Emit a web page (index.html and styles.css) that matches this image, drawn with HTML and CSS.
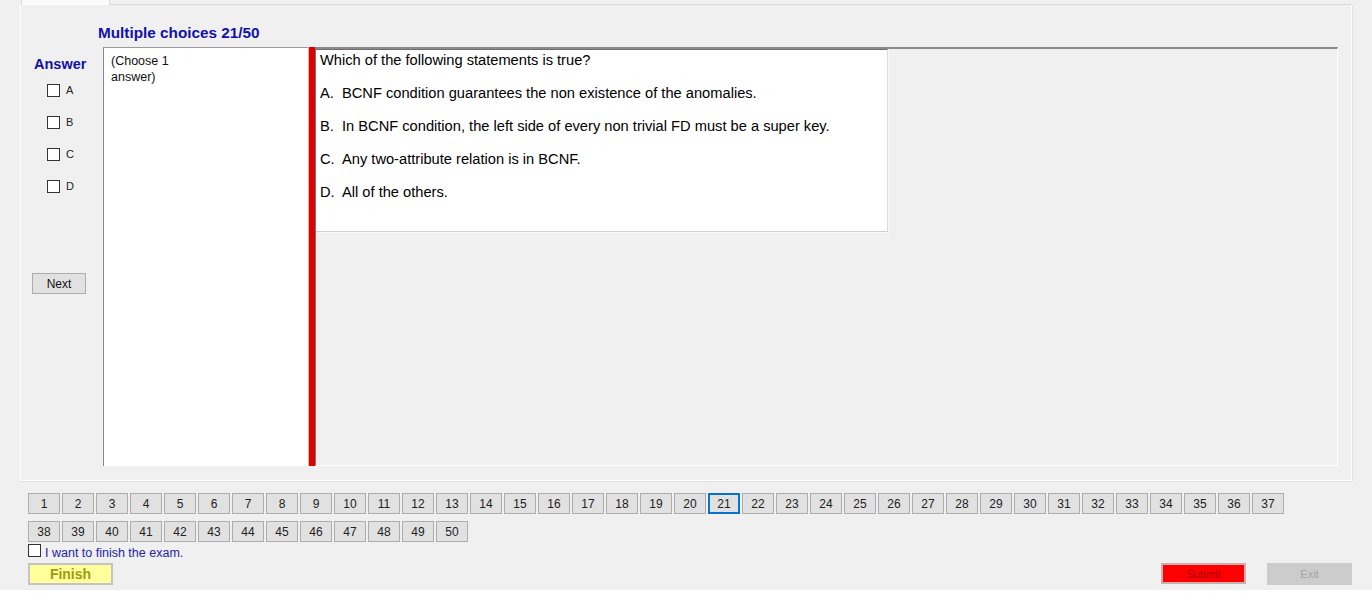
FILE: index.html
```html
<!DOCTYPE html>
<html>
<head>
<meta charset="utf-8">
<title>Exam</title>
<link rel="stylesheet" href="styles.css">
</head>
<body>
<div class="window">
  <div class="tabstrip"><div class="tab"></div><div class="tabline"></div></div>
  <div class="tabpage">
    <div class="title">Multiple choices 21/50</div>
    <div class="main">
      <div class="answer-col">
        <div class="answer-label">Answer</div>
        <div class="opts">
          <div class="opt"><span class="cb"></span><span class="opt-text">A</span></div>
          <div class="opt"><span class="cb"></span><span class="opt-text">B</span></div>
          <div class="opt"><span class="cb"></span><span class="opt-text">C</span></div>
          <div class="opt"><span class="cb"></span><span class="opt-text">D</span></div>
        </div>
        <button class="btn next">Next</button>
      </div>
      <div class="split">
        <div class="left-pane">(Choose 1<br>answer)</div>
        <div class="splitter"></div>
        <div class="right-pane">
          <div class="question">
            <p>Which of the following statements is true?</p>
            <p>A.  BCNF condition guarantees the non existence of the anomalies.</p>
            <p>B.  In BCNF condition, the left side of every non trivial FD must be a super key.</p>
            <p>C.  Any two-attribute relation is in BCNF.</p>
            <p>D.  All of the others.</p>
          </div>
        </div>
      </div>
    </div>
  </div>
  <div class="navgrid">
    <button class="num">1</button><button class="num">2</button><button class="num">3</button><button class="num">4</button><button class="num">5</button><button class="num">6</button><button class="num">7</button><button class="num">8</button><button class="num">9</button><button class="num">10</button><button class="num">11</button><button class="num">12</button><button class="num">13</button><button class="num">14</button><button class="num">15</button><button class="num">16</button><button class="num">17</button><button class="num">18</button><button class="num">19</button><button class="num">20</button><button class="num current">21</button><button class="num">22</button><button class="num">23</button><button class="num">24</button><button class="num">25</button><button class="num">26</button><button class="num">27</button><button class="num">28</button><button class="num">29</button><button class="num">30</button><button class="num">31</button><button class="num">32</button><button class="num">33</button><button class="num">34</button><button class="num">35</button><button class="num">36</button><button class="num">37</button>
    <button class="num">38</button><button class="num">39</button><button class="num">40</button><button class="num">41</button><button class="num">42</button><button class="num">43</button><button class="num">44</button><button class="num">45</button><button class="num">46</button><button class="num">47</button><button class="num">48</button><button class="num">49</button><button class="num">50</button>
  </div>
  <div class="finish-check"><span class="cb"></span><span class="finish-text">I want to finish the exam.</span></div>
  <div class="actions">
    <button class="btn finish">Finish</button>
    <button class="btn submit">Submit</button>
    <button class="btn exit">Exit</button>
  </div>
</div>
</body>
</html>
```
FILE: styles.css
```css
* { box-sizing: border-box; }
html, body { margin: 0; padding: 0; background: #ffffff; }
body { font-family: "Liberation Sans", Arial, sans-serif; color: #000; }

.window {
  width: 1372px;
  height: 590px;
  background: #f0f0f0;
  display: flex;
  flex-direction: column;
}

.tabstrip { height: 5px; display: flex; align-items: stretch; }
.tab {
  margin-left: 21px;
  width: 89px;
  height: 5px;
  background: #fbfbfb;
  border-left: 1px solid #dcdcdc;
  border-right: 1px solid #dcdcdc;
}
.tabline { width: 1242px; border-bottom: 1px solid #dadada; height: 5px; margin-top: 0; }

.tabpage {
  margin-left: 20px;
  width: 1332px;
  height: 476px;
  border-left: 1px solid #fdfdfd;
  border-right: 1px solid #fdfdfd;
  border-bottom: 1px solid #fdfdfd;
  box-shadow: 1px 0 0 #e2e2e2, 0 1px 0 #e2e2e2;
  display: flex;
  flex-direction: column;
}

.title {
  margin-top: 19px;
  height: 18px;
  line-height: 18px;
  padding-left: 77px;
  font-size: 15.3px;
  font-weight: bold;
  color: #1212aa;
}

.main {
  margin-top: 5px;
  height: 419px;
  display: flex;
}

.answer-col {
  width: 82px;
  display: flex;
  flex-direction: column;
}
.answer-label {
  margin-top: 9px;
  padding-left: 13px;
  font-size: 14.5px;
  font-weight: bold;
  line-height: 17px;
  color: #1212aa;
}
.opts {
  margin-top: 11px;
  padding-left: 26px;
  display: flex;
  flex-direction: column;
}
.opt {
  height: 32px;
  display: flex;
  align-items: flex-start;
}
.cb {
  width: 13px;
  height: 13px;
  background: #fff;
  border: 1px solid #333;
  flex: none;
}
.opt-text {
  margin-left: 6px;
  font-size: 11px;
  line-height: 13px;
  color: #222;
}

.btn {
  font-family: "Liberation Sans", Arial, sans-serif;
  padding: 0;
  margin: 0;
  cursor: default;
}
.next {
  margin-top: 61px;
  margin-left: 11px;
  width: 54px;
  height: 21px;
  background: #e1e1e1;
  border: 1px solid #adadad;
  font-size: 12px;
  color: #111;
}

.split {
  width: 1235px;
  display: flex;
}
.left-pane {
  width: 205px;
  background: #fff;
  border-top: 1px solid #9a9a9a;
  border-left: 1px solid #8a8a8a;
  padding: 5px 0 0 7px;
  font-size: 12.5px;
  line-height: 16px;
  color: #111;
}
.splitter {
  width: 7px;
  background: #e00000;
  border-left: 1px solid #f3b4b4;
}
.right-pane {
  flex: 1;
  border-top: 2px solid #8a8a8a;
  border-left: 1px solid #777;
  border-right: 1px solid #fff;
  border-bottom: 1px solid #fff;
}
.question {
  width: 572px;
  height: 183px;
  background: #fff;
  border-top: 1px solid #6e6e6e;
  border-right: 1px solid #dcdcdc;
  border-bottom: 1px solid #d0d0d0;
  box-shadow: 1px 1px 0 #fafafa;
  padding: 2px 0 0 4px;
  font-size: 14.67px;
  line-height: 17px;
  color: #000;
}
.question p {
  margin: 0 0 16px 0;
  white-space: pre;
}

.navgrid {
  margin-top: 12px;
  margin-left: 28px;
  display: grid;
  grid-template-columns: repeat(37, 32px);
  grid-auto-rows: 21px;
  column-gap: 2px;
  row-gap: 7px;
}
.num {
  width: 32px;
  height: 21px;
  padding: 0;
  background: #e1e1e1;
  border: 1px solid #adadad;
  font-family: "Liberation Sans", Arial, sans-serif;
  font-size: 12px;
  color: #222;
}
.num.current {
  border: 2px solid #0a72c8;
}

.finish-check {
  margin-top: 2px;
  margin-left: 28px;
  height: 17px;
  display: flex;
  align-items: flex-start;
}
.finish-text {
  margin-left: 4px;
  margin-top: 2px;
  font-size: 12.5px;
  line-height: 15px;
  color: #2323a8;
}

.actions {
  margin-top: 2px;
  display: flex;
  align-items: flex-start;
}
.finish {
  margin-left: 28px;
  width: 85px;
  height: 22px;
  background: #ffff9c;
  border: 2px solid #c4c4c4;
  font-size: 14px;
  font-weight: bold;
  color: #9c9c10;
}
.submit {
  margin-left: auto;
  width: 85px;
  height: 21px;
  background: #ff0000;
  border: 2px solid #c8b0b0;
  font-size: 11px;
  color: #a80000;
}
.exit {
  margin-left: 21px;
  margin-right: 20px;
  width: 85px;
  height: 22px;
  background: #cccccc;
  border: 1px solid #cccccc;
  font-size: 11px;
  color: #a4a4a4;
}
```
